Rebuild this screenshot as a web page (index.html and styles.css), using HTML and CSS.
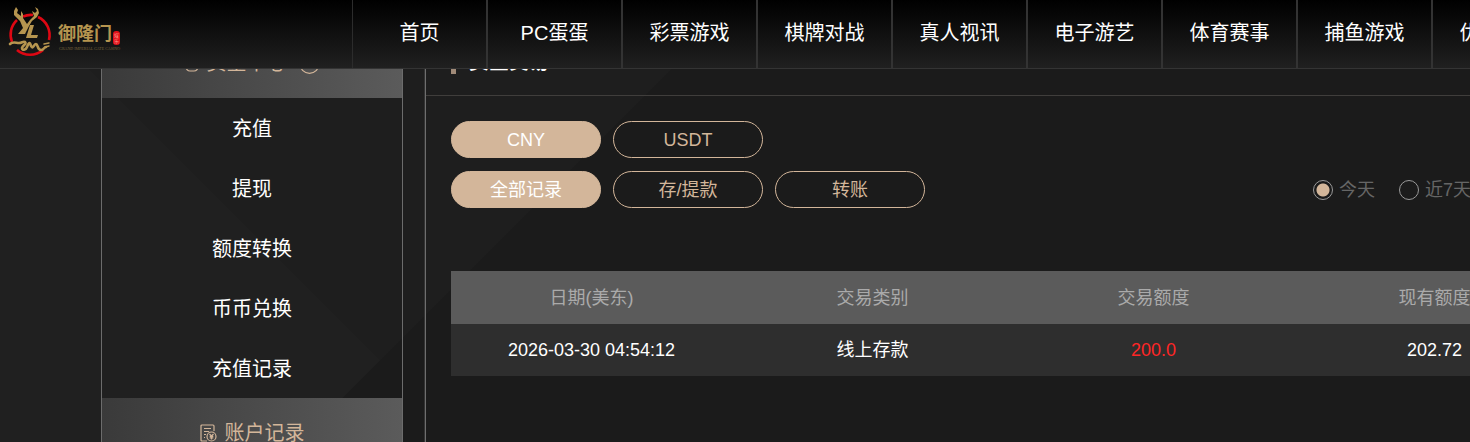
FILE: index.html
```html
<!DOCTYPE html>
<html lang="zh-CN">
<head>
  <meta charset="UTF-8">
  <title>御隆门</title>
  <link rel="stylesheet" href="styles.css">
</head>
<body>
  <header class="header">
    <a class="logo" href="#" aria-label="御隆门">
      <svg width="124" height="60" viewBox="0 0 124 60">
        <!-- ring -->
        <g fill="none" stroke="#de0713" stroke-width="2.6">
          <path d="M17 20 A20 20 0 0 0 12 42"/>
          <path d="M23 16.5 A20 20 0 0 1 33 15"/>
          <path d="M38 17 A20 20 0 0 1 49 40"/>
          <path d="M17 50 A20 20 0 0 0 43 50"/>
        </g>
        <!-- antlers and letters -->
        <g fill="#b6954f">
          <path d="M16 7 L18 10 L17 13 L21 16 L21 11 L23 14 L23 18 L27 24 L30 20 L34 16 L32 11 L35 13 L37 11 L35 7 L38 9 L39 13 L37 17 L32 21 L29 26 L25 34 L18 34 L23 28 L20 21 L14 15 L14 11 Z"/>
          <path d="M30 25 H34 L31 35 H38 L37 38 H26 Z"/>
        </g>
        <g fill="none" stroke="#b6954f" stroke-linecap="round" stroke-linejoin="round">
          <path d="M10 44 C13 41 16 43 19 43 C22 43 23 41 25 42 C27 44 23 45 22 48 C22 51 26 50 27 47 C29 42 30 42 31 46 C33 50 34 44 36 44 C38 44 37 50 41 50 C44 50 44 47 46 47" stroke-width="2.6"/>
          <path d="M44 44 L49 43 M45 47 L49 46" stroke-width="1.5"/>
        </g>
        <text class="logo-name" x="58" y="40">御隆门</text>
        <text class="logo-sub" x="59" y="50">GRAND IMPERIAL GATE CASINO</text>
        <rect x="113" y="31" width="7" height="14" rx="3" fill="#df1018"/>
        <text class="logo-seal" x="114" y="37">娱</text>
        <text class="logo-seal" x="114" y="43">乐</text>
      </svg>
    </a>
    <nav class="nav">
      <a href="#">首页</a>
      <a href="#">PC蛋蛋</a>
      <a href="#">彩票游戏</a>
      <a href="#">棋牌对战</a>
      <a href="#">真人视讯</a>
      <a href="#">电子游艺</a>
      <a href="#">体育赛事</a>
      <a href="#">捕鱼游戏</a>
      <a href="#">优惠活动</a>
    </nav>
  </header>

  <div class="page">
    <aside class="sidebar">
      <h2 class="side-title">
        <svg class="side-icon" width="14" height="18" viewBox="0 0 14 18">
          <path d="M4 5 L3 1 H11 L10 5 M4 5 H10 M4 5 C0 9 0 17 5 17 H9 C14 17 14 9 10 5"/>
        </svg>
        资金中心
        <svg class="side-toggle" width="21" height="21" viewBox="0 0 21 21">
          <circle cx="10.5" cy="10.5" r="9.8"/>
          <path d="M6 9 L10.5 13 L15 9"/>
        </svg>
      </h2>
      <ul class="side-menu">
        <li><a href="#">充值</a></li>
        <li><a href="#">提现</a></li>
        <li><a href="#">额度转换</a></li>
        <li><a href="#">币币兑换</a></li>
        <li><a href="#">充值记录</a></li>
      </ul>
      <h2 class="side-title">
        <svg class="side-icon" width="17" height="18" viewBox="0 0 17 18">
          <path d="M7 17 H2 Q1 17 1 16 V2 Q1 1 2 1 H13 Q14 1 14 2 V7"/>
          <path d="M4 4.5 H11 M4 7.5 H9 M4 10.5 H6 M4 13.5 H5"/>
          <circle cx="11.5" cy="12.5" r="4.5"/>
          <path d="M9.5 10 L11.5 12 L13.5 10 M11.5 12 V15.5 M9.7 12.3 H13.3 M9.7 13.9 H13.3"/>
        </svg>
        账户记录
      </h2>
    </aside>

    <main class="main">
      <div class="main-head">
        <h1 class="main-title">资金交易</h1>
      </div>
      <div class="main-body">
        <div class="filters">
          <button type="button" class="pill active">CNY</button>
          <button type="button" class="pill">USDT</button>
        </div>
        <div class="filters">
          <button type="button" class="pill active">全部记录</button>
          <button type="button" class="pill">存/提款</button>
          <button type="button" class="pill">转账</button>
          <div class="dates">
            <label><input type="radio" name="date" checked>今天</label>
            <label><input type="radio" name="date">近7天</label>
          </div>
        </div>

        <table class="records">
          <thead>
            <tr>
              <th>日期(美东)</th>
              <th>交易类别</th>
              <th>交易额度</th>
              <th>现有额度</th>
            </tr>
          </thead>
          <tbody>
            <tr>
              <td>2026-03-30 04:54:12</td>
              <td>线上存款</td>
              <td class="amount">200.0</td>
              <td>202.72</td>
            </tr>
          </tbody>
        </table>
      </div>
    </main>
  </div>
</body>
</html>
```
FILE: styles.css
```css
* {
  box-sizing: border-box;
}
html {
  overflow: hidden;
}
body {
  margin: 0;
  font-family: "Liberation Sans", "Noto Sans CJK SC", sans-serif;
  font-size: 18px;
  line-height: 24px;
  color: #fff;
  background-color: #1b1b1b;
  background-image:
    linear-gradient(135deg, transparent 523px, #1b1b1b 524px),
    linear-gradient(225deg, #1e1e1e 523px, #202020 524px);
  background-size: 760px 760px;
  background-repeat: no-repeat;
}
a {
  color: inherit;
  text-decoration: none;
}

/* header */
.header {
  position: fixed;
  top: 0;
  left: 0;
  right: 0;
  z-index: 10;
  display: flex;
  height: 69px;
  overflow: hidden;
  background: linear-gradient(#000, #202020);
  border-bottom: 1px solid #343434;
}
.logo {
  flex: none;
  width: 352px;
}
.logo svg {
  display: block;
}
.logo-name {
  font-size: 18px;
  font-weight: bold;
  fill: #b6954f;
}
.logo-sub {
  font-family: "Liberation Serif", serif;
  font-size: 4px;
  fill: #79643c;
}
.logo-seal {
  font-size: 5px;
  fill: #ff9a90;
}
.nav {
  display: flex;
  border-left: 1px solid #2c2c2c;
}
.nav a {
  flex: none;
  width: 135px;
  font-size: 20px;
  line-height: 66px;
  text-align: center;
  border-right: 2px solid #333;
}

/* layout */
.page {
  display: flex;
  min-height: 100vh;
  padding-left: 101px;
}

/* sidebar */
.sidebar {
  flex: none;
  width: 302px;
  padding-top: 28px;
  margin-right: 22px;
  border: solid #6c6c6c;
  border-width: 0 1px;
}
.side-title {
  display: flex;
  align-items: center;
  justify-content: center;
  gap: 8px;
  height: 70px;
  margin: 0;
  font-size: 20px;
  font-weight: normal;
  color: #d3b69a;
  background: linear-gradient(90deg, #3a3a3a, #5b5b5b);
}
.side-icon,
.side-toggle {
  fill: none;
  stroke: #d3b69a;
  stroke-width: 1.2;
}
.side-toggle {
  margin-left: 4px;
}
.side-menu {
  margin: 0;
  padding: 0;
  list-style: none;
}
.side-menu a {
  display: block;
  height: 60px;
  font-size: 20px;
  line-height: 62px;
  text-align: center;
}

/* main */
.main {
  flex: 1;
  min-width: 1175px;
  padding-top: 28px;
  border-left: 1px solid #6e6e6e;
  box-shadow: -1px 0 0 #333;
}
.main-head {
  display: flex;
  align-items: center;
  height: 68px;
  padding: 0 25px;
  border-bottom: 1px solid #403e3c;
}
.main-title {
  margin: 0;
  padding-left: 13px;
  font-size: 20px;
  border-left: 5px solid #a08a78;
}
.main-body {
  padding: 25px;
}
.filters {
  display: flex;
  align-items: center;
  gap: 12px;
  margin-bottom: 13px;
}
.pill {
  width: 150px;
  height: 37px;
  padding: 0;
  font: inherit;
  color: #d3b69a;
  background: transparent;
  border: 1px solid #d3b69a;
  border-radius: 19px;
}
.pill.active {
  color: #fff;
  background: #d3b69a;
}
.dates {
  display: flex;
  gap: 24px;
  margin-left: 376px;
  color: #666;
}
.dates label {
  display: flex;
  align-items: center;
  gap: 6px;
}
.dates input {
  appearance: none;
  width: 20px;
  height: 20px;
  margin: 0;
  border: 1px solid #999;
  border-radius: 50%;
}
.dates input:checked {
  background: radial-gradient(circle, #d3b69a 6px, transparent 7px);
}

/* records table */
.records {
  width: 100%;
  margin-top: 63px;
  table-layout: fixed;
  border-collapse: collapse;
  text-align: center;
}
.records th {
  height: 53px;
  padding: 0;
  font-weight: normal;
  color: #aaa;
  background: #5b5b5b;
}
.records td {
  height: 52px;
  padding: 0;
  background: #2e2e2e;
}
.records .amount {
  color: #ff2626;
}
```
